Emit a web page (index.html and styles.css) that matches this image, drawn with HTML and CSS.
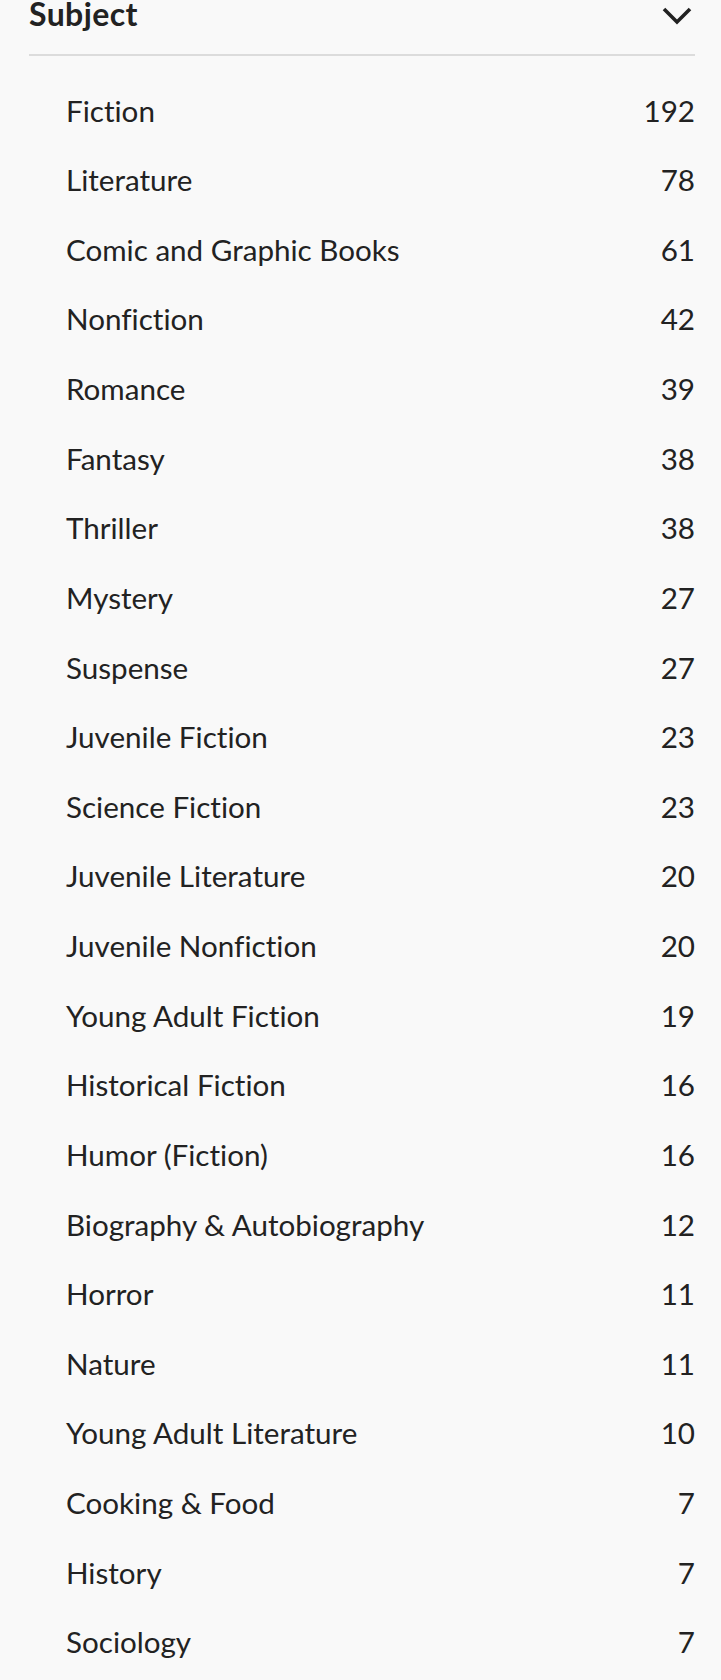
FILE: index.html
```html
<!DOCTYPE html>
<html lang="en">
<head>
<meta charset="utf-8">
<title>Subject</title>
<link rel="stylesheet" href="styles.css">
</head>
<body>
<section class="facet">
  <header class="facet-header">
    <h2 class="facet-title">Subject</h2>
    <svg class="chevron" width="30" height="18" viewBox="0 0 30 18" aria-hidden="true">
      <path d="M2 2 L15 15 L28 2" fill="none" stroke="#222" stroke-width="3.6" stroke-linecap="butt" stroke-linejoin="miter"/>
    </svg>
  </header>
  <ul class="facet-list">
    <li class="facet-item"><span class="label">Fiction</span><span class="count">192</span></li>
    <li class="facet-item"><span class="label">Literature</span><span class="count">78</span></li>
    <li class="facet-item"><span class="label">Comic and Graphic Books</span><span class="count">61</span></li>
    <li class="facet-item"><span class="label">Nonfiction</span><span class="count">42</span></li>
    <li class="facet-item"><span class="label">Romance</span><span class="count">39</span></li>
    <li class="facet-item"><span class="label">Fantasy</span><span class="count">38</span></li>
    <li class="facet-item"><span class="label">Thriller</span><span class="count">38</span></li>
    <li class="facet-item"><span class="label">Mystery</span><span class="count">27</span></li>
    <li class="facet-item"><span class="label">Suspense</span><span class="count">27</span></li>
    <li class="facet-item"><span class="label">Juvenile Fiction</span><span class="count">23</span></li>
    <li class="facet-item"><span class="label">Science Fiction</span><span class="count">23</span></li>
    <li class="facet-item"><span class="label">Juvenile Literature</span><span class="count">20</span></li>
    <li class="facet-item"><span class="label">Juvenile Nonfiction</span><span class="count">20</span></li>
    <li class="facet-item"><span class="label">Young Adult Fiction</span><span class="count">19</span></li>
    <li class="facet-item"><span class="label">Historical Fiction</span><span class="count">16</span></li>
    <li class="facet-item"><span class="label">Humor (Fiction)</span><span class="count">16</span></li>
    <li class="facet-item"><span class="label">Biography &amp; Autobiography</span><span class="count">12</span></li>
    <li class="facet-item"><span class="label">Horror</span><span class="count">11</span></li>
    <li class="facet-item"><span class="label">Nature</span><span class="count">11</span></li>
    <li class="facet-item"><span class="label">Young Adult Literature</span><span class="count">10</span></li>
    <li class="facet-item"><span class="label">Cooking &amp; Food</span><span class="count">7</span></li>
    <li class="facet-item"><span class="label">History</span><span class="count">7</span></li>
    <li class="facet-item"><span class="label">Sociology</span><span class="count">7</span></li>
  </ul>
</section>
</body>
</html>
```

FILE: styles.css
```css
html, body {
  margin: 0;
  padding: 0;
  background: #f9f9f9;
}

body {
  font-family: Lato, "Liberation Sans", sans-serif;
  font-variant-ligatures: none;
  color: #222222;
}

.facet {
  margin: 0 26px 0 29px;
}

.facet-header {
  display: flex;
  justify-content: space-between;
  align-items: flex-start;
  padding-bottom: 26.7px;
  border-bottom: 2px solid #dcdcdc;
}

.facet-title {
  margin: 0;
  font-size: 32px;
  font-weight: 700;
  letter-spacing: 0.4px;
  line-height: 27.3px;
}

.chevron {
  display: block;
  margin-top: 7px;
  margin-right: 3px;
}

.facet-list {
  list-style: none;
  margin: 0;
  padding: 19.8px 0 0 0;
}

.facet-item {
  display: flex;
  justify-content: space-between;
  align-items: baseline;
  padding: 16.82px 0 16.82px 37px;
  font-size: 29.6px;
  line-height: 36px;
}
```
